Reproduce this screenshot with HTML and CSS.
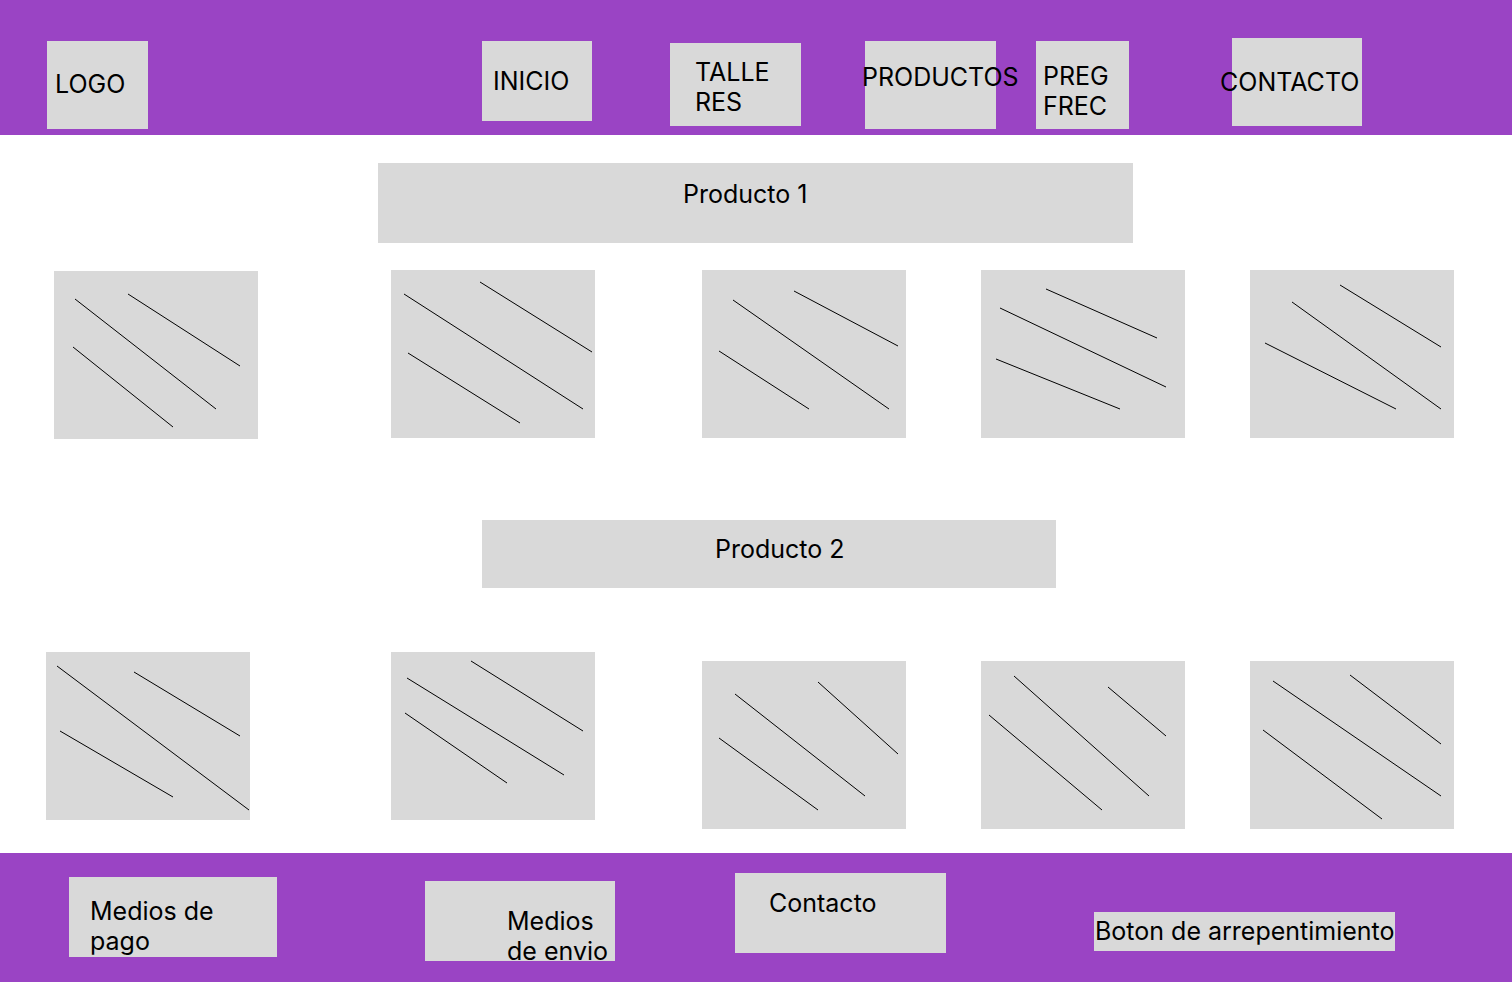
FILE: index.html
```html
<!DOCTYPE html>
<html lang="es">
<head>
    <meta charset="UTF-8">
    <meta name="viewport" content="width=device-width, initial-scale=1.0">
    <title>Tienda - Wireframe</title>
    <link rel="stylesheet" href="styles.css">
</head>
<body>
    <header class="topbar">
        <div class="box logo">LOGO</div>
        <div class="box inicio">INICIO</div>
        <div class="box talleres">TALLE<br>RES</div>
        <div class="box productos">PRODUCTOS</div>
        <div class="box preguntas">PREG<br>FREC</div>
        <div class="box contacto">CONTACTO</div>
    </header>

    <main class="content">
        <div class="box section-title title-1">Producto 1</div>
        <div class="row row-1">
            <div class="box card">
                <svg viewBox="0 0 204 168"><line x1="21" y1="28" x2="162" y2="138"/><line x1="74" y1="23" x2="186" y2="95"/><line x1="19" y1="76" x2="119" y2="156"/></svg>
            </div>
            <div class="box card">
                <svg viewBox="0 0 204 168"><line x1="13" y1="24" x2="192" y2="139"/><line x1="89" y1="12" x2="201" y2="82"/><line x1="17" y1="83" x2="129" y2="153"/></svg>
            </div>
            <div class="box card">
                <svg viewBox="0 0 204 168"><line x1="31" y1="30" x2="187" y2="139"/><line x1="92" y1="21" x2="196" y2="76"/><line x1="17" y1="81" x2="107" y2="139"/></svg>
            </div>
            <div class="box card">
                <svg viewBox="0 0 204 168"><line x1="19" y1="38" x2="185" y2="117"/><line x1="65" y1="19" x2="176" y2="68"/><line x1="15" y1="89" x2="139" y2="139"/></svg>
            </div>
            <div class="box card">
                <svg viewBox="0 0 204 168"><line x1="42" y1="32" x2="191" y2="139"/><line x1="90" y1="15" x2="191" y2="77"/><line x1="15" y1="73" x2="146" y2="139"/></svg>
            </div>
        </div>

        <div class="box section-title title-2">Producto 2</div>
        <div class="row row-2">
            <div class="box card">
                <svg viewBox="0 0 204 168"><line x1="11" y1="14" x2="203" y2="158"/><line x1="88" y1="20" x2="194" y2="84"/><line x1="14" y1="79" x2="127" y2="145"/></svg>
            </div>
            <div class="box card">
                <svg viewBox="0 0 204 168"><line x1="16" y1="26" x2="173" y2="123"/><line x1="80" y1="9" x2="192" y2="79"/><line x1="14" y1="61" x2="116" y2="131"/></svg>
            </div>
            <div class="box card">
                <svg viewBox="0 0 204 168"><line x1="33" y1="33" x2="163" y2="135"/><line x1="116" y1="21" x2="196" y2="93"/><line x1="17" y1="77" x2="116" y2="149"/></svg>
            </div>
            <div class="box card">
                <svg viewBox="0 0 204 168"><line x1="33" y1="15" x2="168" y2="135"/><line x1="127" y1="26" x2="185" y2="75"/><line x1="8" y1="54" x2="121" y2="149"/></svg>
            </div>
            <div class="box card">
                <svg viewBox="0 0 204 168"><line x1="23" y1="20" x2="191" y2="135"/><line x1="100" y1="14" x2="191" y2="83"/><line x1="13" y1="69" x2="132" y2="158"/></svg>
            </div>
        </div>
    </main>

    <footer class="bottombar">
        <div class="box pago">Medios de<br>pago</div>
        <div class="box envio">Medios<br>de envio</div>
        <div class="box footer-contacto">Contacto</div>
        <div class="box arrepentimiento">Boton de arrepentimiento</div>
    </footer>
</body>
</html>
```

FILE: styles.css
```css
body {
    margin: 0;
    width: 1512px;
    height: 982px;
    overflow: hidden;
    background: white;
    font-family: Inter, "Noto Sans", Arial, sans-serif;
    font-size: 25px;
    line-height: 30px;
    color: black;
}
.box {
    background: #d9d9d9;
    box-sizing: border-box;
    white-space: nowrap;
}

/* top navigation */
.topbar {
    display: flex;
    align-items: flex-start;
    height: 135px;
    background: #9a44c4;
}
.logo {
    width: 101px;
    height: 88px;
    margin: 41px 0 0 47px;
    padding: 28px 0 0 8px;
}
.inicio {
    width: 110px;
    height: 80px;
    margin: 41px 0 0 334px;
    padding: 25px 0 0 11px;
}
.talleres {
    width: 131px;
    height: 83px;
    margin: 43px 0 0 78px;
    padding: 14px 0 0 25px;
}
.productos {
    width: 131px;
    height: 88px;
    margin: 41px 0 0 64px;
    padding: 21px 0 0 0;
    text-indent: -3px;
}
.preguntas {
    width: 93px;
    height: 88px;
    margin: 41px 0 0 40px;
    padding: 20px 0 0 7px;
}
.contacto {
    width: 130px;
    height: 88px;
    margin: 38px 0 0 103px;
    padding: 29px 0 0 0;
    text-indent: -12px;
}

/* products */
.content {
    height: 718px;
    display: flex;
    flex-direction: column;
    align-items: flex-start;
}
.title-1 {
    width: 755px;
    height: 80px;
    margin: 28px 0 0 378px;
    padding: 16px 0 0 305px;
}
.title-2 {
    width: 574px;
    height: 68px;
    margin: 81px 0 0 482px;
    padding: 14px 0 0 233px;
}
.row {
    display: flex;
    align-items: flex-start;
}
.row-1 {
    margin-top: 27px;
}
.row-2 {
    margin-top: 64px;
}
.card {
    width: 204px;
    height: 168px;
}
.card svg {
    display: block;
    width: 100%;
    height: 100%;
    overflow: visible;
}
.card line {
    stroke: black;
    stroke-width: 1;
}
.row-1 .card:nth-child(1) { margin: 1px 0 0 54px; }
.row-1 .card:nth-child(2) { margin-left: 133px; }
.row-1 .card:nth-child(3) { margin-left: 107px; }
.row-1 .card:nth-child(4) { margin-left: 75px; }
.row-1 .card:nth-child(5) { margin-left: 65px; }
.row-2 .card:nth-child(1) { margin-left: 46px; }
.row-2 .card:nth-child(2) { margin-left: 141px; }
.row-2 .card:nth-child(3) { margin: 9px 0 0 107px; }
.row-2 .card:nth-child(4) { margin: 9px 0 0 75px; }
.row-2 .card:nth-child(5) { margin: 9px 0 0 65px; }

/* footer */
.bottombar {
    display: flex;
    align-items: flex-start;
    height: 129px;
    background: #9a44c4;
}
.pago {
    width: 208px;
    height: 80px;
    margin: 24px 0 0 69px;
    padding: 19px 0 0 21px;
}
.envio {
    width: 190px;
    height: 80px;
    margin: 28px 0 0 148px;
    padding: 25px 0 0 82px;
}
.footer-contacto {
    width: 211px;
    height: 80px;
    margin: 20px 0 0 120px;
    padding: 15px 0 0 34px;
}
.arrepentimiento {
    width: 301px;
    height: 39px;
    margin: 59px 0 0 148px;
    padding: 4px 0 0 1px;
}
```
